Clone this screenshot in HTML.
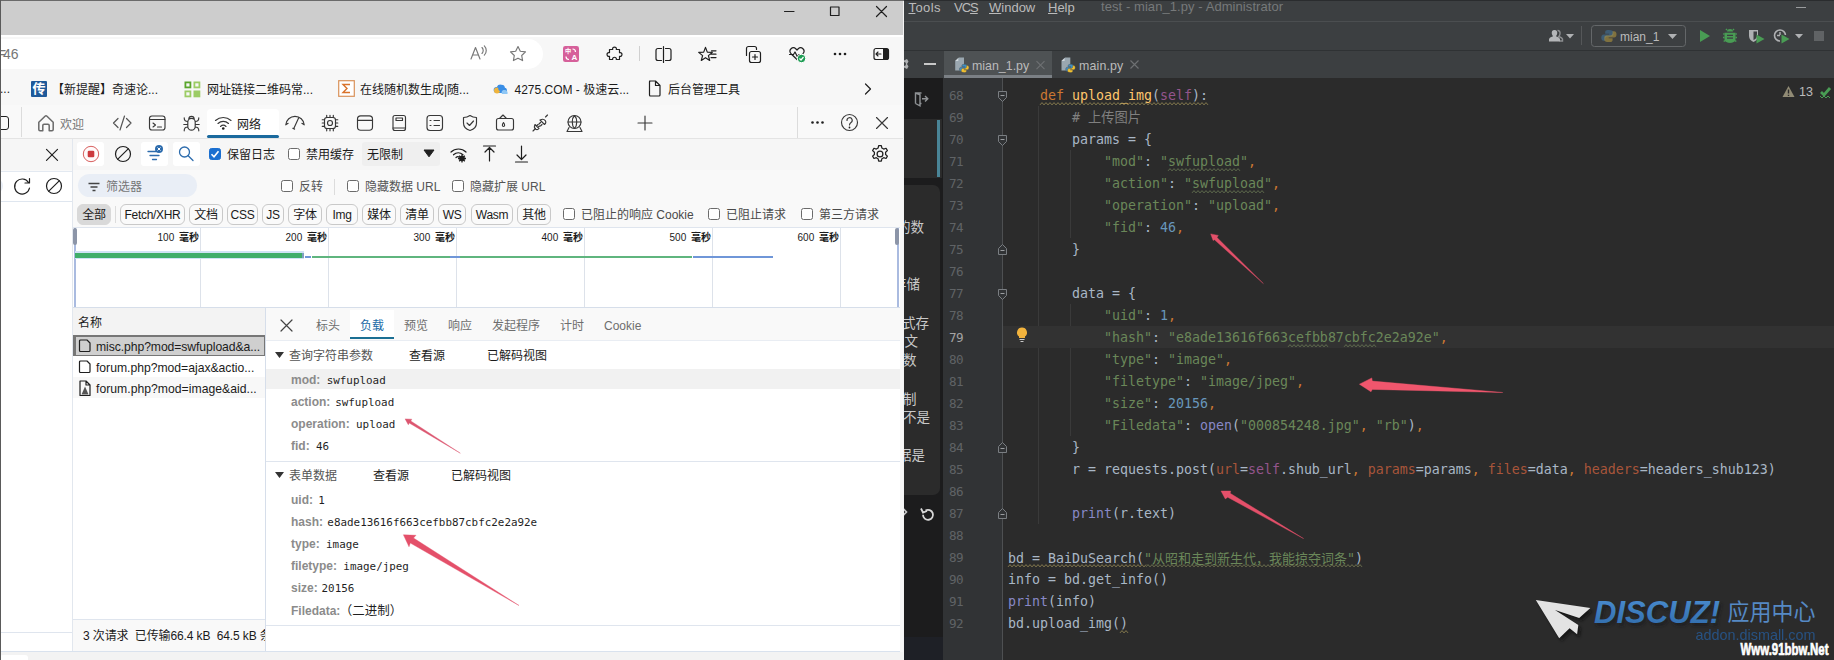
<!DOCTYPE html>
<html lang="zh-CN">
<head>
<meta charset="utf-8">
<title>screenshot</title>
<style>
*{box-sizing:border-box;margin:0;padding:0}
html,body{width:1834px;height:660px;overflow:hidden;background:#2b2b2b}
body{position:relative;font-family:"Liberation Sans","Noto Sans CJK SC",sans-serif;font-size:12px;color:#1b1b1b}
.a{position:absolute}
.t{position:absolute;white-space:nowrap;line-height:16px}
svg{position:absolute;overflow:visible}
/* ---------- browser ---------- */
#br{position:absolute;left:0;top:0;width:904px;height:660px;background:#f7f7f7;overflow:hidden}
#br:after{content:"";position:absolute;left:0;top:0;width:1px;height:660px;background:#5a5a5a}
.ic{fill:none;stroke:#1f1f1f;stroke-width:1.2;stroke-linecap:round;stroke-linejoin:round}
.cb{position:absolute;width:12px;height:12px;border:1px solid #6b6b6b;border-radius:2.5px;background:#fff}
.pill{position:absolute;top:204px;height:21px;letter-spacing:-0.300px;padding-top:1px;border:1px solid #c9c9c9;border-radius:6px;background:#fafafa;text-align:center;line-height:19px;font-size:12px;color:#1b1b1b;white-space:nowrap}
.gl{position:absolute;top:228px;width:1px;height:79px;background:#dde2ea}
.tl{position:absolute;top:232px;font-size:10px;word-spacing:2px;line-height:12px;white-space:nowrap;text-align:right;width:60px;color:#1b1b1b}
.dt{position:absolute;top:317.700px;font-size:12px;line-height:16px;color:#6e6e6e;white-space:nowrap}
.k{color:#8b8b8b;font-weight:bold;font-family:"Liberation Sans","Noto Sans CJK SC",sans-serif;font-size:12px}
.v{font-family:"DejaVu Sans Mono","Liberation Mono","Noto Sans CJK SC",monospace;font-size:10.900px;color:#1f1f1f;margin-left:3px}
.row{position:absolute;left:291px;white-space:nowrap;line-height:16px}
/* ---------- ide ---------- */
#ide{position:absolute;left:904px;top:0;width:930px;height:660px;background:#2b2b2b;overflow:hidden;color:#a9b7c6}
.ln{position:absolute;left:0;width:930px;height:22px}
.no{position:absolute;left:45px;top:1px;width:30px;line-height:22px;font-family:"DejaVu Sans Mono","Liberation Mono",monospace;font-size:12.600px;letter-spacing:-0.700px;color:#606366;white-space:pre}
.cd{position:absolute;left:104px;top:1px;line-height:22px;font-family:"DejaVu Sans Mono","Liberation Mono","Noto Sans CJK SC",monospace;font-size:13.29px;color:#a9b7c6;white-space:pre}
.sd{left:-7px;font-size:13.500px;line-height:18px;color:#c9c9c9;font-family:"Noto Sans CJK SC",sans-serif}
.cj{font-family:"Noto Sans CJK SC",sans-serif;font-size:13px}
.cur{color:#a4a3a3}
.kw{color:#cc7832}.fn{color:#ffc66d}.sf{color:#94558d}.st{color:#6a8759}.nu{color:#6897bb}.cm{color:#808080}.bi{color:#8888c6}.ka{color:#a8553a}
.wv{}
.wy{}
</style>
</head>
<body>
<div id="br">
<!-- title bar -->
<div class="a" style="left:0;top:0;width:904px;height:35px;background:#cdcdcd"></div>
<div class="a" style="left:0;top:0;width:904px;height:1px;background:#6a6a6a"></div>
<svg style="left:783px;top:5px" width="110" height="14" viewBox="0 0 110 14"><path class="ic" style="stroke-width:1.2" d="M1.500 6.500h9.500M47.500 2h8.500v8.500h-8.500zM93.500 1.500l10 10M103.500 1.500l-10 10"/></svg>
<!-- address row -->
<div class="a" style="left:0;top:35px;width:904px;height:2px;background:#fff"></div>
<div class="a" style="left:903px;top:1px;width:1px;height:659px;background:#f4f4f4;z-index:3"></div>
<div class="a" style="left:-20px;top:39px;width:563px;height:30px;background:#fff;border-radius:15px"></div>
<div class="t" style="left:3px;top:46px;font-size:14px;color:#767676">46</div>
<div class="t" style="left:-2px;top:45px;font-size:14px;color:#767676">=</div>
<svg style="left:468px;top:44px" width="420" height="22" viewBox="0 0 420 22">
 <g class="ic" style="stroke:#777;stroke-width:1.150">
  <path d="M3 15l4.5-11.5L12 15M4.6 11h5.8M14 3.5c1.6 1.6 1.6 4.4 0 6M16.3 1.8c2.6 2.6 2.6 6.8 0 9.4"/>
  <path d="M50 2.5l2.3 4.7 5.2.7-3.8 3.6.9 5.1-4.6-2.4-4.6 2.4.9-5.1-3.800-3.600 5.200-.7z"/>
 </g>
 <rect x="95" y="2" width="16" height="16" rx="2.300" fill="#d6609a"/>
 <text x="97" y="9.300" font-size="6.200" fill="#fff" font-family="Liberation Sans,Noto Sans CJK SC,sans-serif" font-weight="bold">中</text>
 <text x="103.500" y="16" font-size="8" fill="#fff" font-family="Liberation Sans,sans-serif" font-weight="bold">A</text>
 <path d="M98 12.500c0 2 1 3 3 3M104.500 5c2 0 3 1 3 3" stroke="#fff" fill="none" stroke-width="1.200"/>
 <g class="ic">
  <path d="M141.500 5.500h3.200c-.9-3.300 4.500-3.300 3.600 0h3.200v3.200c3.300-.9 3.300 4.500 0 3.600v3.200h-3.200c.9-3 -4.500-3-3.600 0h-3.200v-3.200c-3.300.9-3.300-4.500 0-3.600z"/>
  <path d="M193.500 4.500h-3.500a2 2 0 0 0-2 2v8a2 2 0 0 0 2 2h3.500M197.500 4.500h3.500a2 2 0 0 1 2 2v8a2 2 0 0 1-2 2h-3.500M195.500 2.500v16"/>
  <path d="M237.5 3.4L239.3 8.1L244.3 8.4L240.4 11.6L241.7 16.4L237.5 13.7L233.3 16.4L234.6 11.6L230.7 8.4L235.7 8.1z M243.500 6.800h4.500M242.300 10.200h5.700M243 13.600h5"/>
  <path d="M278.500 11.500v-7a2 2 0 0 1 2-2h6a2 2 0 0 1 2 2v1M283.500 7.500h7a2 2 0 0 1 2 2v7a2 2 0 0 1-2 2h-7a2 2 0 0 1-2-2v-7a2 2 0 0 1 2-2zM287 10.500v5M284.500 13h5"/>
  <path d="M329 15.500l-6-5.800c-3-3.500 1.500-8 5-4.700l1 1 1-1c3.500-3.300 8 1.200 5 4.700M321.500 10.500h4l1.500-2.500 2.500 5 1.500-2.500h2"/>
 </g>
 <circle cx="333.500" cy="14.500" r="4.200" fill="#1f9d55" stroke="#fff" stroke-width="1"/>
 <path d="M331.500 14.500l1.500 1.500 2.500-3" stroke="#fff" fill="none" stroke-width="1.200"/>
 <circle cx="367" cy="10" r="1.300" fill="#1f1f1f"/><circle cx="372" cy="10" r="1.300" fill="#1f1f1f"/><circle cx="377" cy="10" r="1.300" fill="#1f1f1f"/>
 <rect x="406" y="4.500" width="14.500" height="11" rx="2" class="ic"/>
 <path d="M415 4.500h3.500a2 2 0 0 1 2 2v7a2 2 0 0 1-2 2h-3.500z" fill="#1f1f1f"/>
 <path d="M413 10h-5M410 8l-2 2 2 2" class="ic" style="stroke-width:1.100"/>
</svg>
<div class="a" style="left:639px;top:46px;width:1px;height:15px;background:#d0d0d0"></div>
<!-- bookmarks -->
<div class="t" style="left:0;top:81px;font-size:12px">...</div>
<div class="a" style="left:31px;top:81px;width:16px;height:16px;background:#1f5a9a;border-radius:1px"></div>
<div class="t" style="left:32.500px;top:80px;font-size:13px;line-height:17px;color:#fff;font-weight:bold">传</div>
<div class="t" style="left:52px;top:82px">【新提醒】奇速论...</div>
<svg style="left:184px;top:81px" width="17" height="17" viewBox="0 0 17 17"><g fill="none" stroke="#5aa62c" stroke-width="1.800"><rect x="1.400" y="1.400" width="5" height="5"/></g><g fill="none" stroke="#9ccc65" stroke-width="1.800"><rect x="10.400" y="1.400" width="5" height="5"/><rect x="1.400" y="10.400" width="5" height="5"/></g><rect x="9.500" y="9.500" width="6.800" height="6.800" fill="#9ccc65"/></svg>
<div class="t" style="left:207px;top:82px">网址链接二维码常...</div>
<svg style="left:338px;top:80px" width="17" height="17" viewBox="0 0 17 17"><rect x=".700" y=".700" width="15.600" height="15.600" fill="#fff" stroke="#d9925a" stroke-width="1.200"/><path d="M12 4.500H5l4 4-4 4h7" fill="none" stroke="#d9722a" stroke-width="1.400"/></svg>
<div class="t" style="left:360px;top:82px">在线随机数生成|随...</div>
<svg style="left:493px;top:82px" width="16" height="13" viewBox="0 0 16 13"><path d="M3.500 11a3 3 0 0 1 .3-6 4 4 0 0 1 7.500.5 2.800 2.800 0 0 1 .7 5.500z" fill="#3a8ee6"/><circle cx="4" cy="8.500" r="3" fill="#f0b43c"/><circle cx="8.500" cy="6" r="3.300" fill="#3a8ee6"/><path d="M9 12c-1-2 0-4 2.500-4s3.500 2 3 4z" fill="#8fc7f5"/></svg>
<div class="t" style="left:514.500px;top:82px">4275.COM - 极速云...</div>
<svg style="left:648px;top:80px" width="13" height="17" viewBox="0 0 13 17"><path class="ic" d="M1.500 1h6l4.500 4.500v9.500a1 1 0 0 1-1 1h-8.500a1 1 0 0 1-1-1v-13a1 1 0 0 1 1-1zM7.500 1v4.500h4.500"/></svg>
<div class="t" style="left:668px;top:82px">后台管理工具</div>
<svg style="left:863px;top:82px" width="10" height="14" viewBox="0 0 10 14"><path class="ic" d="M2.500 2l5 5-5 5"/></svg>
<!-- devtools tabs row -->
<div class="a" style="left:0;top:105px;width:904px;height:33px;background:#f9f9f9"></div>
<div class="a" style="left:0;top:138px;width:904px;height:1px;background:#e4e4e4"></div>
<div class="a" style="left:21px;top:107px;width:1px;height:30px;background:#dcdcdc"></div>
<div class="a" style="left:-6px;top:116px;width:15px;height:14px;border:1.300px solid #1f1f1f;border-radius:3px"></div>
<div class="a" style="left:207px;top:109px;width:72px;height:27px;background:#fff;border-radius:4px 4px 0 0"></div>
<div class="a" style="left:207px;top:135px;width:72px;height:3px;background:#1b6a9e;border-radius:2px"></div>
<div class="t" style="left:60px;top:116.500px;color:#767676">欢迎</div>
<div class="t" style="left:237px;top:116.500px">网络</div>
<svg style="left:0;top:105px" width="904" height="34" viewBox="0 0 904 34">
 <g class="ic" style="stroke:#555">
  <path d="M38.800 17.200l6.200-6a1.500 1.500 0 0 1 2 0l6.200 6v7.300a1.200 1.200 0 0 1-1.200 1.200h-2.800v-5.200a1.200 1.200 0 0 0-1.200-1.200h-4a1.200 1.200 0 0 0-1.200 1.200v5.200h-2.800a1.200 1.200 0 0 1-1.200-1.200z" style="stroke:#6a6a6a;stroke-width:1.500"/>
  <path d="M118 13.500l-4.500 4.500 4.500 4.500M126.500 13.500l4.500 4.500-4.500 4.500M124.500 11l-4.500 14"/>
 </g>
 <g class="ic" style="stroke:#383838;stroke-width:1.150">
  <rect x="149.500" y="11" width="15.500" height="14" rx="2.500"/><path d="M149.500 14.500h15.500M153 18l2.500 2-2.500 2M157.500 22h4"/>
  <path d="M187.800 17a3.700 3.700 0 0 1 7.400 0v4.500a3.700 3.700 0 0 1-7.400 0zM188.900 13.900a2.600 2.600 0 0 1 5.200 0M187.800 16.500c-2.300 0-3.600-1.200-3.600-3.800M187.800 19.500h-4M187.800 22c-2.300 0-3.600 1.200-3.600 3.800M195.200 16.500c2.300 0 3.600-1.200 3.600-3.800M195.200 19.500h4M195.200 22c2.300 0 3.600 1.200 3.600 3.800"/>
  <path d="M215.500 15.500c4.500-4 11-4 15.500 0M218 18.500c3-2.800 7.500-2.800 10.500 0M220.500 21.500c1.600-1.500 3.900-1.500 5.500 0"/>
  <path d="M285.800 19.800a9.230 9.230 0 0 1 18.400 0M285.800 19.800l2.300-1.500M304.200 19.800l-2.300-1.500M293.800 23.500l4.800-10.500M292.800 23.300l1.800.8"/>
  <circle cx="330" cy="18" r="2.500"/><rect x="324.500" y="12.500" width="11" height="11" rx="2.500"/><path d="M326.700 12.500v-2.300M330 12.500v-2.300M333.300 12.500v-2.300M326.700 25.800v-2.300M330 25.800v-2.300M333.300 25.800v-2.300M324.500 14.700h-2.300M324.500 18h-2.300M324.500 21.300h-2.300M337.800 14.700h-2.300M337.800 18h-2.300M337.800 21.300h-2.300"/>
  <rect x="357.500" y="10.800" width="15" height="14.400" rx="3.200"/><path d="M357.500 15.300h15"/>
  <rect x="393" y="10.500" width="12.500" height="15" rx="2"/><path d="M393 23h12.500M396 13h6.500v2.500h-6.500z"/>
  <rect x="427" y="10.500" width="15.500" height="15" rx="3"/><path d="M434 15.500h5.500M434 20.500h5.500M430 15.500h1M430 20.500h1"/>
  <path d="M470 10.500c2.500 1.800 4.500 2 6.500 2v5.500c0 4-3 6.500-6.500 7.500-3.500-1-6.500-3.500-6.500-7.500v-5.500c2 0 4-.2 6.500-2zM467 18l2.500 2.500 4-4.500"/>
  <rect x="496.500" y="13.500" width="17" height="11.500" rx="2"/><path d="M499.500 13.500l3.500-3.500 3.500 3.500M503.500 17.500c-1.500 2-1.500 4 0 4s1.500-2 0-4z"/>
  <path d="M533 26l2.500-2.500M535 19.500l4 4c-2 2.500-6 .5-4-4zM536.500 21l1.500-1.500M538 22.500l1.500-1.500M545.500 12l2-2M540 15l4.500 4.500c3-2 .5-7-4.500-4.500zM540.500 17.500l-1.500 1.500M542 19.500l-1.500 1.500"/>
  <circle cx="574.500" cy="17" r="6.500"/><path d="M568 17h13M574.500 10.500c-3 3-3 10 0 13M574.500 10.500c3 3 3 10 0 13M569 22.500l-2 4h15l-2-4"/>
  <path d="M645 11v14M638 18h14"/>
  <path d="M876.500 12.500l11 11M887.500 12.500l-11 11"/>
  <circle cx="849.500" cy="17.500" r="8"/><path d="M847 15.500a2.600 2.600 0 1 1 4 2c-1 .8-1.500 1.200-1.500 2.500"/>
 </g>
 <circle cx="849.500" cy="22.500" r=".900" fill="#1f1f1f"/>
 <circle cx="223.250" cy="23.500" r="1.300" fill="#1f1f1f"/>
 <circle cx="812.500" cy="17.500" r="1.300" fill="#1f1f1f"/><circle cx="817.500" cy="17.500" r="1.300" fill="#1f1f1f"/><circle cx="822.500" cy="17.500" r="1.300" fill="#1f1f1f"/>
</svg>
<div class="a" style="left:797px;top:107px;width:1px;height:31px;background:#dcdcdc"></div>
<!-- network toolbar row y139-170 -->
<div class="a" style="left:0;top:139px;width:904px;height:31px;background:#f6f6f6"></div>
<div class="a" style="left:0;top:169.500px;width:904px;height:1px;background:#d9e2ee"></div>
<div class="a" style="left:0;top:170px;width:904px;height:30px;background:#f9f9f9"></div>
<div class="a" style="left:0;top:170.500px;width:72px;height:462px;background:#fff;border-top:1px solid #e3e9f1"></div>
<div class="a" style="left:0;top:201px;width:72px;height:1px;background:#dfe6ef"></div>
<div class="a" style="left:-30px;top:177px;width:33px;height:18px;background:#e9eef6;border-radius:9px"></div>
<div class="a" style="left:72px;top:139px;width:1px;height:512px;background:#e2e7ee"></div>
<div class="a" style="left:77px;top:142px;width:27px;height:24px;background:#fff;border-radius:3px"></div>
<div class="a" style="left:141px;top:142px;width:27px;height:24px;background:#fff;border-radius:3px"></div>
<div class="a" style="left:173px;top:142px;width:27px;height:24px;background:#fff;border-radius:3px"></div>
<div class="a" style="left:362px;top:142px;width:78px;height:24px;background:#efefef;border-radius:3px"></div>
<div class="a" style="left:78px;top:174px;width:119px;height:23px;background:#e9eef6;border-radius:12px"></div>
<svg style="left:0;top:139px" width="904" height="62" viewBox="0 0 904 62">
 <g class="ic">
  <path d="M46.500 10.300l11 11M57.500 10.300l-11 11"/>
  <circle cx="123" cy="15" r="7.500"/><path d="M117.800 20.200l10.400-10.400"/>
  <circle cx="54" cy="47" r="7.500"/><path d="M48.800 52.200l10.400-10.400"/>
  <path d="M28.500 43.500a7.500 7.500 0 1 0 1 5.500M29.500 39.500v4.500h-4.500"/>
  <path d="M451 13c4.200-4 10.800-4 15 0M453.500 15.800c2.800-2.600 6.700-2.600 9.500 0M456 18.500c1.300-1.200 2.200-1.200 3 -.5"/>
  <path d="M489.500 22v-13.500M485 13l4.500-4.500 4.500 4.500M483.500 7h12"/>
  <path d="M521.500 7v13.500M517 16l4.500 4.500 4.500-4.500M515.500 23h12"/>
  <g transform="translate(880 15) scale(1.120) translate(-880 -15)" style="stroke-width:1.100"><circle cx="880" cy="15" r="2.600"/>
  <path d="M878.800 7.500h2.400l.5 2.200 1.600.9 2.100-.7 1.200 2.100-1.600 1.500v1.900l1.600 1.500-1.200 2.100-2.100-.7-1.600.9-.5 2.200h-2.400l-.5-2.200-1.600-.9-2.100.7-1.200-2.100 1.600-1.500v-1.900l-1.600-1.500 1.200-2.100 2.100.7 1.600-.9z"/></g>
 </g>
 <circle cx="91" cy="15" r="7.700" fill="#fffafa" stroke="#d8605f" stroke-width="1"/>
 <rect x="87.700" y="11.700" width="6.600" height="6.600" rx="1.300" fill="#cc3a3e"/>
 <g fill="none" stroke="#2d6cad" stroke-width="1.300" stroke-linecap="round">
  <path d="M148 12.500h8M150 16.500h9M152.500 20.500h4"/>
  <circle cx="184.500" cy="13" r="5"/><path d="M188.200 16.700l4.800 4.800"/>
 </g>
 <circle cx="159" cy="10" r="4" fill="#2d6cad"/><path d="M157.500 8.500l3 3M160.500 8.500l-3 3" stroke="#fff" stroke-width="1" fill="none"/>
 <circle cx="462" cy="19.500" r="2.800" fill="#1f1f1f"/><circle cx="462" cy="19.500" r="1" fill="#f3f3f3"/>
 <path d="M462 15.500v8M458 19.500h8M459.200 16.700l5.600 5.600M464.800 16.700l-5.600 5.600" stroke="#1f1f1f" stroke-width="1.300"/>
 <path d="M424 11h10l-5 6.800z" fill="#1f1f1f" stroke="#1f1f1f" stroke-width="1" stroke-linejoin="round"/>
 <path d="M88.500 44.500h11M90.500 48h7M92.500 51.500h3" stroke="#444" stroke-width="1.400" fill="none"/>
</svg>
<div class="cb" style="left:208.500px;top:148px;background:#1a6fd0;border-color:#1a6fd0"></div>
<svg style="left:209px;top:148px" width="12" height="12" viewBox="0 0 12 12"><path d="M2.500 6.200l2.500 2.500 4.500-5.500" fill="none" stroke="#fff" stroke-width="1.600"/></svg>
<div class="t" style="left:227px;top:147px">保留日志</div>
<div class="cb" style="left:288px;top:148px"></div>
<div class="t" style="left:306px;top:147px">禁用缓存</div>
<div class="t" style="left:367px;top:147px">无限制</div>
<!-- filter row -->
<div class="t" style="left:106px;top:179px;color:#767676">筛选器</div>
<div class="cb" style="left:281px;top:180px"></div><div class="t" style="left:299px;top:179px;color:#555">反转</div>
<div class="a" style="left:334px;top:179px;width:1px;height:16px;background:#dcdcdc"></div>
<div class="cb" style="left:347px;top:180px"></div><div class="t" style="left:365px;top:179px;color:#555">隐藏数据 URL</div>
<div class="cb" style="left:452px;top:180px"></div><div class="t" style="left:470px;top:179px;color:#555">隐藏扩展 URL</div>
<!-- type pills -->
<div class="a" style="left:73px;top:200px;width:831px;height:28px;background:#f9f9f9"></div>
<div class="pill" style="left:77px;width:34px;background:#d9d9d9;border-color:#d9d9d9">全部</div>
<div class="a" style="left:115px;top:206px;width:1px;height:17px;background:#dcdcdc"></div>
<div class="pill" style="left:120px;width:65px">Fetch/XHR</div>
<div class="pill" style="left:189px;width:34px">文档</div>
<div class="pill" style="left:227px;width:31px">CSS</div>
<div class="pill" style="left:262px;width:22px">JS</div>
<div class="pill" style="left:288px;width:34px">字体</div>
<div class="pill" style="left:326px;width:32px">Img</div>
<div class="pill" style="left:362px;width:34px">媒体</div>
<div class="pill" style="left:400px;width:34px">清单</div>
<div class="pill" style="left:438px;width:28px">WS</div>
<div class="pill" style="left:471px;width:42px">Wasm</div>
<div class="pill" style="left:517px;width:34px">其他</div>
<div class="cb" style="left:563px;top:208px"></div><div class="t" style="left:581px;top:207px;color:#4a4a4a">已阻止的响应 Cookie</div>
<div class="cb" style="left:708px;top:208px"></div><div class="t" style="left:726px;top:207px;color:#4a4a4a">已阻止请求</div>
<div class="cb" style="left:801px;top:208px"></div><div class="t" style="left:819px;top:207px;color:#4a4a4a">第三方请求</div>
<!-- timeline -->
<div class="a" style="left:73px;top:227px;width:831px;height:1px;background:#dfe5ee"></div>
<div class="a" style="left:73px;top:228px;width:827px;height:79px;background:#fff"></div>
<div class="a" style="left:73px;top:307px;width:831px;height:1px;background:#d6deea"></div>
<div class="gl" style="left:200px"></div><div class="gl" style="left:328px"></div><div class="gl" style="left:456px"></div><div class="gl" style="left:584px"></div><div class="gl" style="left:712px"></div><div class="gl" style="left:840px"></div>
<div class="tl" style="left:139px">100 <b>毫秒</b></div><div class="tl" style="left:267px">200 <b>毫秒</b></div><div class="tl" style="left:395px">300 <b>毫秒</b></div><div class="tl" style="left:523px">400 <b>毫秒</b></div><div class="tl" style="left:651px">500 <b>毫秒</b></div><div class="tl" style="left:779px">600 <b>毫秒</b></div>
<div class="a" style="left:73.500px;top:228px;width:2px;height:79px;background:#aabbe0"></div>
<div class="a" style="left:896.500px;top:228px;width:2px;height:79px;background:#aabbe0"></div>
<div class="a" style="left:73px;top:228px;width:4px;height:17px;background:#8c95a8;border-radius:2px"></div>
<div class="a" style="left:895px;top:228px;width:4px;height:17px;background:#8c95a8;border-radius:2px"></div>
<div class="a" style="left:75px;top:251px;width:229px;height:8px;background:#cfe3f5"></div>
<div class="a" style="left:75px;top:252.500px;width:228px;height:5px;background:#3fae6a"></div>
<div class="a" style="left:302px;top:252.500px;width:2px;height:5px;background:#7f9fc0"></div>
<div class="a" style="left:305px;top:255.500px;width:6px;height:2px;background:#6f96d8"></div>
<div class="a" style="left:312px;top:255.500px;width:138px;height:2px;background:#5fb57e"></div>
<div class="a" style="left:450px;top:255.500px;width:10px;height:2px;background:#6f96d8"></div>
<div class="a" style="left:460px;top:255.500px;width:232px;height:2px;background:#5fb57e"></div>
<div class="a" style="left:693px;top:255.500px;width:80px;height:2px;background:#6f96d8"></div>
<!-- request list -->
<div class="a" style="left:73px;top:308px;width:192px;height:311px;background:#fff"></div>
<div class="a" style="left:73px;top:308px;width:192px;height:27px;background:#f3f3f3"></div>
<div class="t" style="left:78px;top:314.500px">名称</div>
<div class="a" style="left:73px;top:335px;width:192px;height:21px;background:#cfcfcf;border:1px solid #767676;border-top-width:2px;border-left-width:3px"></div>
<div class="a" style="left:73px;top:377px;width:192px;height:21px;background:#f8f8f8"></div>
<div class="t" style="left:96px;top:338.700px;font-size:12.200px;letter-spacing:-0.080px">misc.php?mod=swfupload&amp;a...</div>
<div class="t" style="left:96px;top:359.700px;font-size:12.200px;letter-spacing:-0.020px">forum.php?mod=ajax&amp;actio...</div>
<div class="t" style="left:96px;top:380.700px;font-size:12.200px;letter-spacing:0.020px">forum.php?mod=image&amp;aid...</div>
<svg style="left:79px;top:339px" width="13" height="58" viewBox="0 0 13 58">
 <g class="ic" style="stroke-width:1.200"><path d="M1.500 1h6.500l3 3v7.500a1 1 0 0 1-1 1h-8.500a1 1 0 0 1-1-1v-9.500a1 1 0 0 1 1-1zM1.500 22h6.500l3 3v7.500a1 1 0 0 1-1 1h-8.500a1 1 0 0 1-1-1v-9.500a1 1 0 0 1 1-1zM1 42h6l4 4v10.500h-10zM7 42v4h4"/></g>
 <path d="M2.500 55.500l3.500-8 3.500 8z" fill="#555"/>
</svg>
<div class="a" style="left:265px;top:308px;width:1px;height:343px;background:#d6deea"></div>
<!-- status bar -->
<div class="a" style="left:73px;top:619px;width:192px;height:1px;background:#dfe5ee"></div>
<div class="a" style="left:73px;top:620px;width:192px;height:31px;background:#f9f9f9"></div>
<div class="t" style="left:83px;top:628px;width:182px;overflow:hidden;letter-spacing:-0.120px">3 次请求&nbsp;&nbsp;已传输66.4 kB&nbsp;&nbsp;64.5 kB 条资源</div>
<div class="a" style="left:0;top:632px;width:72px;height:1px;background:#dfe5ee"></div>
<div class="a" style="left:0;top:633px;width:72px;height:18px;background:#fff"></div>
<div class="a" style="left:0;top:651px;width:904px;height:1px;background:#d9e2ee"></div>
<div class="a" style="left:0;top:652px;width:904px;height:8px;background:#f3f3f3"></div>
<div class="a" style="left:0;top:655px;width:28px;height:5px;background:#fff;border-radius:3px 3px 0 0"></div>
<!-- details pane -->
<div class="a" style="left:266px;top:308px;width:638px;height:343px;background:#fff"></div>
<div class="a" style="left:266px;top:308px;width:638px;height:32px;background:#f9f9f9"></div>
<div class="a" style="left:266px;top:340px;width:638px;height:1px;background:#e9edf3"></div>
<div class="a" style="left:350px;top:310px;width:44px;height:29px;background:#fff"></div>
<div class="a" style="left:350px;top:336.800px;width:44px;height:2.200px;background:#1b6f93"></div>
<svg style="left:280px;top:319px" width="13" height="13" viewBox="0 0 13 13"><path class="ic" style="stroke:#444" d="M1 1l11 11M12 1l-11 11"/></svg>
<div class="dt" style="left:316px">标头</div>
<div class="dt" style="left:360px;color:#1a6aa6">负载</div>
<div class="dt" style="left:404px">预览</div>
<div class="dt" style="left:448px">响应</div>
<div class="dt" style="left:492px">发起程序</div>
<div class="dt" style="left:560px">计时</div>
<div class="dt" style="left:604px">Cookie</div>
<div class="a" style="left:266px;top:369px;width:634px;height:20px;background:#f1f1f1"></div>
<div class="a" style="left:266px;top:461px;width:638px;height:1px;background:#dfe5ee"></div>
<div class="a" style="left:266px;top:625px;width:638px;height:1px;background:#dfe5ee"></div>
<svg style="left:275px;top:351px" width="10" height="130" viewBox="0 0 10 130"><path d="M0 1h9l-4.500 6zM0 121h9l-4.500 6z" fill="#333"/></svg>
<div class="t" style="left:289px;top:348px;color:#555">查询字符串参数</div>
<div class="t" style="left:409px;top:348px">查看源</div>
<div class="t" style="left:487px;top:348px">已解码视图</div>
<div class="row" style="top:372px"><span class="k">mod:</span> <span class="v">swfupload</span></div>
<div class="row" style="top:394px"><span class="k">action:</span> <span class="v" style="margin-left:1.500px">swfupload</span></div>
<div class="row" style="top:416px"><span class="k">operation:</span> <span class="v">upload</span></div>
<div class="row" style="top:438px"><span class="k">fid:</span> <span class="v">46</span></div>
<div class="t" style="left:289px;top:468px;color:#555">表单数据</div>
<div class="t" style="left:373px;top:468px">查看源</div>
<div class="t" style="left:451px;top:468px">已解码视图</div>
<div class="row" style="top:492px"><span class="k">uid:</span> <span class="v" style="margin-left:2px">1</span></div>
<div class="row" style="top:514px"><span class="k">hash:</span> <span class="v" style="margin-left:1px">e8ade13616f663cefbb87cbfc2e2a92e</span></div>
<div class="row" style="top:536px"><span class="k">type:</span> <span class="v">image</span></div>
<div class="row" style="top:558px"><span class="k">filetype:</span> <span class="v">image/jpeg</span></div>
<div class="row" style="top:580px"><span class="k">size:</span> <span class="v" style="margin-left:.500px">20156</span></div>
<div class="row" style="top:602px"><span class="k">Filedata:</span><span class="v" style="margin-left:-.500px;font-size:12.500px;font-family:'Noto Sans CJK SC',sans-serif">（二进制）</span></div>
<!-- right edge of browser window -->
<div class="a" style="left:900px;top:139px;width:4px;height:513px;background:#f7f7f7"></div>


</div>
<div id="ide">
<!-- title + toolbar -->
<div class="a" style="left:0;top:0;width:930px;height:78px;background:#3c3f41"></div>
<div class="a" style="left:0;top:0;width:930px;height:1px;background:#2a2c2e"></div>
<div class="a" style="left:0;top:21px;width:930px;height:1px;background:#4b4e50"></div>
<div class="a" style="left:0;top:50px;width:930px;height:1px;background:#2f3234"></div>
<div class="t" style="left:4.500px;top:0px;font-size:13px;letter-spacing:.400px;color:#bbbbbb"><u>T</u>ools</div>
<div class="t" style="left:50px;top:0px;font-size:13px;letter-spacing:-1px;color:#bbbbbb">VC<u>S</u></div>
<div class="t" style="left:85px;top:0px;font-size:13px;color:#bbbbbb"><u>W</u>indow</div>
<div class="t" style="left:144px;top:0px;font-size:13px;color:#bbbbbb"><u>H</u>elp</div>
<div class="t" style="left:197px;top:-1px;font-size:13px;letter-spacing:0.070px;color:#76797a">test - mian_1.py - Administrator</div>
<div class="a" style="left:892px;top:7px;width:10px;height:1px;background:#9a9c9e"></div>
<!-- toolbar icons -->
<svg style="left:640px;top:22px" width="290" height="28" viewBox="0 0 290 28">
 <path d="M13.500 8.500c2 0 2.800 1.500 2.500 3.500-.2 1.200-.8 2-1.200 2.500 1.200.5 3.200 1 3.700 2.500v2h-3" fill="none" stroke="#8c8e90" stroke-width="1.400"/><path d="M10.500 8c2.200 0 3 1.600 2.700 3.600-.2 1.300-.8 2.100-1.300 2.700 1.500.6 3.600 1.200 4.100 2.900v2.300h-11v-2.300c.5-1.700 2.600-2.300 4.100-2.900-.5-.6-1.100-1.400-1.300-2.700-.300-2 .5-3.600 2.700-3.600z" fill="#b4b6b8"/>
 <path d="M22 12h8l-4 4.500z" fill="#afb1b3"/>
 <rect x="37" y="4" width="1" height="19" fill="#555759"/>
 <rect x="47.500" y="3.500" width="94" height="21" rx="3" fill="none" stroke="#646769"/>
 <path d="M64 7c-4 0-4 1.500-4 3v1.500h4.500v.8h-6c-2.500 0-3 2-3 3.700s.5 3.500 3 3.500h1.500v-2.200c0-1.800 1.200-2.800 3-2.800h4c1.500 0 2.500-1 2.500-2.500v-2c0-2-1.500-3-5.500-3z" fill="#3f7aa8" opacity=".5" transform="translate(9 1.800) scale(.87)"/>
 <path d="M64.500 21c4 0 4-1.500 4-3v-1.500h-4.500v-.8h6c2.500 0 3-2 3-3.700s-.5-3.500-3-3.500h-1.500v2.200c0 1.800-1.200 2.800-3 2.800h-4c-1.500 0-2.500 1-2.500 2.500v2c0 2 1.500 3 5.500 3z" fill="#b89a3c" opacity=".55" transform="translate(9 1.800) scale(.87)"/>
 <path d="M124 12h9l-4.500 5z" fill="#afb1b3"/>
 <path d="M156 8l10 6-10 6z" fill="#499c54"/>
 <g fill="none" stroke="#499c54" stroke-width="1.500"><path d="M180.500 12h-1.300M180.500 15.500h-1.500M181 18.500l-1.300 1M191.500 12h1.300M191.500 15.500h1.500M191 18.500l1.300 1M183 8l-1-1M189 8l1-1"/></g>
 <path d="M183 9.500a3 2.600 0 0 1 6 0z" fill="#499c54"/><path d="M180.500 10.800h11v6.200c0 5.200-11 5.200-11 0z" fill="#499c54"/>
 <path d="M183 13.300h6M183 16.200h6" stroke="#3c3f41" stroke-width="1.300"/>
 <path d="M205 8h9v6c0 3-2 5-4.500 6-2.500-1-4.500-3-4.500-6z" fill="#afb1b3"/><path d="M209.500 9.500h3.500v4.500c0 1.500-1.300 3-3.500 4z" fill="#3c3f41"/>
 <path d="M212.500 12.500l8 4.500-8 4.500z" fill="#499c54"/>
 <circle cx="236" cy="13.500" r="5.500" fill="none" stroke="#afb1b3" stroke-width="1.600"/><path d="M236 10v3.500h-3" stroke="#afb1b3" stroke-width="1.400" fill="none"/>
 <rect x="236" y="13" width="10" height="10" fill="#3c3f41"/>
 <path d="M237.500 12.500l8 4.500-8 4.500z" fill="#499c54"/>
 <path d="M251 12h8l-4 4.500z" fill="#afb1b3"/>
 <rect x="270" y="9" width="10" height="10" fill="#606365"/>
</svg>
<div class="t" style="left:716px;top:29px;font-size:12px;color:#bbbbbb">mian_1</div>
<!-- tab row -->
<div class="a" style="left:40px;top:51px;width:108px;height:27px;background:#4e5254"></div>
<div class="a" style="left:40px;top:75px;width:108px;height:3px;background:#7b8085"></div>
<div class="a" style="left:20px;top:63px;width:12px;height:2px;background:#c8c8c8"></div>
<svg style="left:0;top:57px" width="10" height="14" viewBox="0 0 10 14"><path d="M-3 2l3 1.500 3-1.500 1.500 2.500-1.500 2.500 1.500 2.500-1.500 2.500-3-1.500-3 1.500z" fill="#afb1b3"/><circle cx="0" cy="7" r="2" fill="#3c3f41"/></svg>
<svg style="left:49.500px;top:56.600px" width="130" height="16" viewBox="0 0 130 16">
 <g><path d="M4.800 .500h5.200v13h-8.800v-9.400z" fill="#9aa7b0"/><path d="M4.300 .900v3.200h-3.200z" fill="#cfd6db"/>
 <g transform="translate(2.600 2.800) scale(.820)"><path d="M9 5.500c-2.500 0-2.500 1-2.500 2v1h3v.5h-4c-1.500 0-2 1.200-2 2.500s.5 2.500 2 2.500h1v-1.500c0-1.200.8-2 2-2h2.500c1 0 1.800-.8 1.800-1.800v-1.200c0-1.300-1-2-3.800-2z" fill="#3d8fc4" stroke="#4e5254" stroke-width=".600"/>
 <path d="M9.500 15.500c2.500 0 2.500-1 2.500-2v-1h-3v-.5h4c1.500 0 2-1.200 2-2.500s-.5-2.500-2-2.500h-1v1.500c0 1.200-.8 2-2 2h-2.500c-1 0-1.800.8-1.800 1.800v1.200c0 1.300 1 2 3.800 2z" fill="#f2c12e" stroke="#4e5254" stroke-width=".400"/></g></g>
 <g transform="translate(106.300 0)"><path d="M4.800 .500h5.200v13h-8.800v-9.400z" fill="#9aa7b0"/><path d="M4.300 .900v3.200h-3.200z" fill="#cfd6db"/>
 <g transform="translate(2.600 2.800) scale(.820)"><path d="M9 5.500c-2.500 0-2.500 1-2.500 2v1h3v.5h-4c-1.500 0-2 1.200-2 2.500s.5 2.500 2 2.500h1v-1.500c0-1.200.8-2 2-2h2.500c1 0 1.800-.8 1.800-1.800v-1.200c0-1.300-1-2-3.800-2z" fill="#3d8fc4" stroke="#4e5254" stroke-width=".600"/>
 <path d="M9.500 15.500c2.500 0 2.500-1 2.500-2v-1h-3v-.5h4c1.500 0 2-1.200 2-2.500s-.5-2.500-2-2.500h-1v1.500c0 1.200-.8 2-2 2h-2.500c-1 0-1.800.8-1.800 1.800v1.200c0 1.300 1 2 3.800 2z" fill="#f2c12e" stroke="#4e5254" stroke-width=".400"/></g></g>
 <path d="M82.500 4.200l8 8M90.500 4.200l-8 8" stroke="#6e7173" stroke-width="1.100" fill="none"/>
</svg>
<svg style="left:225px;top:59.500px" width="12" height="10" viewBox="0 0 12 10"><path d="M1.500 .500l8 8M9.500 .500l-8 8" stroke="#6e7173" stroke-width="1.100" fill="none"/></svg>
<div class="t" style="left:68px;top:57.500px;font-size:12.400px;color:#bbbbbb">mian_1.py</div>
<div class="t" style="left:175px;top:57.500px;font-size:12.400px;letter-spacing:.150px;color:#bbbbbb">main.py</div>
<!-- editor -->
<div class="a" style="left:0;top:78px;width:40px;height:582px;background:#1c1c1d"></div>
<div class="a" style="left:0;top:119px;width:38px;height:59px;background:#2b2b2b"></div>
<div class="a" style="left:33px;top:120px;width:3px;height:57px;background:#4a8597"></div>
<div class="a" style="left:-8px;top:185px;width:44px;height:310px;background:#2b2b2b;border-radius:7px"></div>
<div class="a" style="left:0;top:637px;width:40px;height:23px;background:#1e2026"></div>
<svg style="left:10px;top:91px" width="16" height="16" viewBox="0 0 16 16"><path d="M7.500 2h-6v10.500M1.500 2l4.500 1.800v11l-4.500-2.300M6 12.500h1.500M8 7.800h5.500M11 5l2.800 2.800-2.800 2.800" fill="none" stroke="#8f9295" stroke-width="1.400"/></svg>
<svg style="left:0;top:505px" width="40" height="18" viewBox="0 0 40 18"><path d="M-1 3.500l3.500 3.500-3.500 3.500" fill="none" stroke="#c8c8c8" stroke-width="1.600"/><path d="M21.500 5.500a5 5 0 1 1-2.500 4.300M17 3.500l2 4 4-1.500" fill="none" stroke="#d8d8d8" stroke-width="1.800"/></svg>
<div class="t sd" style="top:217px;left:-7px">的数</div>
<div class="t sd" style="top:274px;left:-11px">存储</div>
<div class="t sd" style="top:312.5px;left:-2px">式存</div>
<div class="t sd" style="top:331px;left:.500px">文</div>
<div class="t sd" style="top:350px;left:-1px">数</div>
<div class="t sd" style="top:388.5px;left:-1px">制</div>
<div class="t sd" style="top:406.5px;left:-1px">不是</div>
<div class="t sd" style="top:444.5px;left:-6px">据是</div>
<div class="a" style="left:39px;top:78px;width:60px;height:582px;background:#313335"></div>
<div class="a" style="left:98px;top:78px;width:1px;height:582px;background:#4e5052"></div>
<!-- indent guides -->
<div class="a" style="left:134px;top:106px;width:1px;height:418px;background:#3a3a3a"></div>
<div class="a" style="left:166px;top:150px;width:1px;height:88px;background:#3a3a3a"></div>
<div class="a" style="left:166px;top:304px;width:1px;height:132px;background:#3a3a3a"></div>
<!-- fold markers -->
<svg style="left:93px;top:78.800px" width="12" height="450" viewBox="0 0 12 450">
 <g fill="#313335" stroke="#7a7e82" stroke-width="1">
  <path d="M1.500 12.500h8v6l-4 4-4-4zM1.500 56.500h8v6l-4 4-4-4zM1.500 210.500h8v6l-4 4-4-4z"/>
  <path d="M1.500 175.500h8v-6l-4-4-4 4zM1.500 373.500h8v-6l-4-4-4 4zM1.500 439.500h8v-6l-4-4-4 4z"/>
 </g>
 <path d="M3.500 16.500h4M3.500 60.500h4M3.500 214.500h4M3.500 171.500h4M3.500 369.500h4M3.500 435.500h4" stroke="#9a9da0" stroke-width="1"/>
</svg>
<!-- warnings -->
<svg style="left:878px;top:85px" width="52" height="14" viewBox="0 0 52 14"><path d="M6.500 1l6 11h-12z" fill="#918b75"/><path d="M6.500 4.500v4M6.500 9.800v1.200" stroke="#2b2b2b" stroke-width="1.400"/><path d="M39 7l3 3 6-7" fill="none" stroke="#499c54" stroke-width="2.800"/><path d="M38 11l2 2 2-2 2 2 2-2 2 2" fill="none" stroke="#499c54" stroke-width="1"/></svg>
<div class="t" style="left:895px;top:84px;font-size:12.500px;color:#bbbbbb">13</div>
<div class="ln" style="top:84px"><span class="no">68</span><span class="cd">    <span class="wy"><span class="kw">def </span><span class="fn">upload_img</span>(<span class="sf">self</span>):</span></span></div>
<div class="ln" style="top:106px"><span class="no">69</span><span class="cd">        <span class="cm"># 上传图片</span></span></div>
<div class="ln" style="top:128px"><span class="no">70</span><span class="cd">        params = {</span></div>
<div class="ln" style="top:150px"><span class="no">71</span><span class="cd">            <span class="st">"mod"</span>: <span class="st">"<span class="wv">swfupload</span>"</span><span class="kw">,</span></span></div>
<div class="ln" style="top:172px"><span class="no">72</span><span class="cd">            <span class="st">"action"</span>: <span class="st">"<span class="wv">swfupload</span>"</span><span class="kw">,</span></span></div>
<div class="ln" style="top:194px"><span class="no">73</span><span class="cd">            <span class="st">"operation"</span>: <span class="st">"upload"</span><span class="kw">,</span></span></div>
<div class="ln" style="top:216px"><span class="no">74</span><span class="cd">            <span class="st">"fid"</span>: <span class="nu">46</span><span class="kw">,</span></span></div>
<div class="ln" style="top:238px"><span class="no">75</span><span class="cd">        }</span></div>
<div class="ln" style="top:260px"><span class="no">76</span><span class="cd"></span></div>
<div class="ln" style="top:282px"><span class="no">77</span><span class="cd">        data = {</span></div>
<div class="ln" style="top:304px"><span class="no">78</span><span class="cd">            <span class="st">"uid"</span>: <span class="nu">1</span><span class="kw">,</span></span></div>
<div class="ln" style="top:326px"><div class="a" style="left:99px;top:0;width:831px;height:22px;background:#323232"></div><span class="no cur">79</span><span class="cd">            <span class="st">"hash"</span>: <span class="st">"e8ade13616f663<span class="wv">cefbb</span>87<span class="wv">cbfc</span>2e2a92e"</span><span class="kw">,</span></span></div>
<div class="ln" style="top:348px"><span class="no">80</span><span class="cd">            <span class="st">"type"</span>: <span class="st">"image"</span><span class="kw">,</span></span></div>
<div class="ln" style="top:370px"><span class="no">81</span><span class="cd">            <span class="st">"filetype"</span>: <span class="st">"image/jpeg"</span><span class="kw">,</span></span></div>
<div class="ln" style="top:392px"><span class="no">82</span><span class="cd">            <span class="st">"size"</span>: <span class="nu">20156</span><span class="kw">,</span></span></div>
<div class="ln" style="top:414px"><span class="no">83</span><span class="cd">            <span class="st">"Filedata"</span>: <span class="bi">open</span>(<span class="st">"000854248.jpg"</span><span class="kw">, </span><span class="st">"rb"</span>)<span class="kw">,</span></span></div>
<div class="ln" style="top:436px"><span class="no">84</span><span class="cd">        }</span></div>
<div class="ln" style="top:458px"><span class="no">85</span><span class="cd">        r = requests.post(<span class="ka">url</span>=<span class="sf">self</span>.shub_url<span class="kw">, </span><span class="ka">params</span>=params<span class="kw">, </span><span class="ka">files</span>=data<span class="kw">, </span><span class="ka">headers</span>=headers_shub123)</span></div>
<div class="ln" style="top:480px"><span class="no">86</span><span class="cd"></span></div>
<div class="ln" style="top:502px"><span class="no">87</span><span class="cd">        <span class="bi">print</span>(r.text)</span></div>
<div class="ln" style="top:524px"><span class="no">88</span><span class="cd"></span></div>
<div class="ln" style="top:546px"><span class="no">89</span><span class="cd"><span class="wy">bd = BaiDuSearch(<span class="st">"<span class="cj">从昭和走到新生代，我能掠夺词条</span>"</span>)</span></span></div>
<div class="ln" style="top:568px"><span class="no">90</span><span class="cd">info = bd.get_info()</span></div>
<div class="ln" style="top:590px"><span class="no">91</span><span class="cd"><span class="bi">print</span>(info)</span></div>
<div class="ln" style="top:612px"><span class="no">92</span><span class="cd">bd.upload_img(<span class="wy">)</span></span></div>
<!-- bulb -->
<svg style="left:112px;top:327px" width="12" height="16" viewBox="0 0 12 16"><path d="M6 .500a5 5 0 0 1 3 9v1.500h-6v-1.500a5 5 0 0 1 3-9z" fill="#f2b33d"/><path d="M3.500 12.500h5M4.500 14.500h3" stroke="#c9c9c9" stroke-width="1.100"/></svg>
<!-- waves -->
<svg style="left:0;top:0" width="930" height="660" viewBox="0 0 930 660"><g fill="none" stroke-width=".850" stroke-linejoin="round" opacity=".850">
 <path d="M136.0 104.9L138.0 102.6L140.0 104.9L142.0 102.6L144.0 104.9L146.0 102.6L148.0 104.9L150.0 102.6L152.0 104.9L154.0 102.6L156.0 104.9L158.0 102.6L160.0 104.9L162.0 102.6L164.0 104.9L166.0 102.6L168.0 104.9L170.0 102.6L172.0 104.9L174.0 102.6L176.0 104.9L178.0 102.6L180.0 104.9L182.0 102.6L184.0 104.9L186.0 102.6L188.0 104.9L190.0 102.6L192.0 104.9L194.0 102.6L196.0 104.9L198.0 102.6L200.0 104.9L202.0 102.6L204.0 104.9L206.0 102.6L208.0 104.9L210.0 102.6L212.0 104.9L214.0 102.6L216.0 104.9L218.0 102.6L220.0 104.9L222.0 102.6L224.0 104.9L226.0 102.6L228.0 104.9L230.0 102.6L232.0 104.9L234.0 102.6L236.0 104.9L238.0 102.6L240.0 104.9L242.0 102.6L244.0 104.9L246.0 102.6L248.0 104.9L250.0 102.6L252.0 104.9L254.0 102.6L256.0 104.9L258.0 102.6L260.0 104.9L262.0 102.6L264.0 104.9L266.0 102.6L268.0 104.9L270.0 102.6L272.0 104.9L274.0 102.6L276.0 104.9L278.0 102.6L280.0 104.9L282.0 102.6L284.0 104.9L286.0 102.6L288.0 104.9L290.0 102.6L292.0 104.9L294.0 102.6L296.0 104.9L298.0 102.6L300.0 104.9L302.0 102.6L304.0 104.9" stroke="#a6975c"/>
 <path d="M264.0 170.9L266.0 168.6L268.0 170.9L270.0 168.6L272.0 170.9L274.0 168.6L276.0 170.9L278.0 168.6L280.0 170.9L282.0 168.6L284.0 170.9L286.0 168.6L288.0 170.9L290.0 168.6L292.0 170.9L294.0 168.6L296.0 170.9L298.0 168.6L300.0 170.9L302.0 168.6L304.0 170.9L306.0 168.6L308.0 170.9L310.0 168.6L312.0 170.9L314.0 168.6L316.0 170.9L318.0 168.6L320.0 170.9L322.0 168.6L324.0 170.9L326.0 168.6L328.0 170.9L330.0 168.6L332.0 170.9L334.0 168.6L336.0 170.9" stroke="#72825a"/>
 <path d="M288.0 192.9L290.0 190.6L292.0 192.9L294.0 190.6L296.0 192.9L298.0 190.6L300.0 192.9L302.0 190.6L304.0 192.9L306.0 190.6L308.0 192.9L310.0 190.6L312.0 192.9L314.0 190.6L316.0 192.9L318.0 190.6L320.0 192.9L322.0 190.6L324.0 192.9L326.0 190.6L328.0 192.9L330.0 190.6L332.0 192.9L334.0 190.6L336.0 192.9L338.0 190.6L340.0 192.9L342.0 190.6L344.0 192.9L346.0 190.6L348.0 192.9L350.0 190.6L352.0 192.9L354.0 190.6L356.0 192.9L358.0 190.6L360.0 192.9" stroke="#72825a"/>
 <path d="M384.0 346.9L386.0 344.6L388.0 346.9L390.0 344.6L392.0 346.9L394.0 344.6L396.0 346.9L398.0 344.6L400.0 346.9L402.0 344.6L404.0 346.9L406.0 344.6L408.0 346.9L410.0 344.6L412.0 346.9L414.0 344.6L416.0 346.9L418.0 344.6L420.0 346.9L422.0 344.6L424.0 346.9" stroke="#72825a"/>
 <path d="M440.0 346.9L442.0 344.6L444.0 346.9L446.0 344.6L448.0 346.9L450.0 344.6L452.0 346.9L454.0 344.6L456.0 346.9L458.0 344.6L460.0 346.9L462.0 344.6L464.0 346.9L466.0 344.6L468.0 346.9L470.0 344.6L472.0 346.9" stroke="#72825a"/>
 <path d="M104.0 566.9L106.0 564.6L108.0 566.9L110.0 564.6L112.0 566.9L114.0 564.6L116.0 566.9L118.0 564.6L120.0 566.9L122.0 564.6L124.0 566.9L126.0 564.6L128.0 566.9L130.0 564.6L132.0 566.9L134.0 564.6L136.0 566.9L138.0 564.6L140.0 566.9L142.0 564.6L144.0 566.9L146.0 564.6L148.0 566.9L150.0 564.6L152.0 566.9L154.0 564.6L156.0 566.9L158.0 564.6L160.0 566.9L162.0 564.6L164.0 566.9L166.0 564.6L168.0 566.9L170.0 564.6L172.0 566.9L174.0 564.6L176.0 566.9L178.0 564.6L180.0 566.9L182.0 564.6L184.0 566.9L186.0 564.6L188.0 566.9L190.0 564.6L192.0 566.9L194.0 564.6L196.0 566.9L198.0 564.6L200.0 566.9L202.0 564.6L204.0 566.9L206.0 564.6L208.0 566.9L210.0 564.6L212.0 566.9L214.0 564.6L216.0 566.9L218.0 564.6L220.0 566.9L222.0 564.6L224.0 566.9L226.0 564.6L228.0 566.9L230.0 564.6L232.0 566.9L234.0 564.6L236.0 566.9L238.0 564.6L240.0 566.9L242.0 564.6" stroke="#a6975c"/>
 <path d="M242.0 566.9L244.0 564.6L246.0 566.9L248.0 564.6L250.0 566.9L252.0 564.6L254.0 566.9L256.0 564.6L258.0 566.9L260.0 564.6L262.0 566.9L264.0 564.6L266.0 566.9L268.0 564.6L270.0 566.9L272.0 564.6L274.0 566.9L276.0 564.6L278.0 566.9L280.0 564.6L282.0 566.9L284.0 564.6L286.0 566.9L288.0 564.6L290.0 566.9L292.0 564.6L294.0 566.9L296.0 564.6L298.0 566.9L300.0 564.6L302.0 566.9L304.0 564.6L306.0 566.9L308.0 564.6L310.0 566.9L312.0 564.6L314.0 566.9L316.0 564.6L318.0 566.9L320.0 564.6L322.0 566.9L324.0 564.6L326.0 566.9L328.0 564.6L330.0 566.9L332.0 564.6L334.0 566.9L336.0 564.6L338.0 566.9L340.0 564.6L342.0 566.9L344.0 564.6L346.0 566.9L348.0 564.6L350.0 566.9L352.0 564.6L354.0 566.9L356.0 564.6L358.0 566.9L360.0 564.6L362.0 566.9L364.0 564.6L366.0 566.9L368.0 564.6L370.0 566.9L372.0 564.6L374.0 566.9L376.0 564.6L378.0 566.9L380.0 564.6L382.0 566.9L384.0 564.6L386.0 566.9L388.0 564.6L390.0 566.9L392.0 564.6L394.0 566.9L396.0 564.6L398.0 566.9L400.0 564.6L402.0 566.9L404.0 564.6L406.0 566.9L408.0 564.6L410.0 566.9L412.0 564.6L414.0 566.9L416.0 564.6L418.0 566.9L420.0 564.6L422.0 566.9L424.0 564.6L426.0 566.9L428.0 564.6L430.0 566.9L432.0 564.6L434.0 566.9L436.0 564.6L438.0 566.9L440.0 564.6L442.0 566.9L444.0 564.6L446.0 566.9L448.0 564.6L450.0 566.9L452.0 564.6L454.0 566.9L456.0 564.6L458.0 566.9" stroke="#84895a"/>
 <path d="M216.0 632.9L218.0 630.6L220.0 632.9L222.0 630.6L224.0 632.9" stroke="#a6975c"/>
</g></svg>

</div>
<svg style="left:0;top:0" width="1834" height="660" viewBox="0 0 1834 660">
 <g fill="#e4506a" stroke="#e4506a" stroke-width=".400" stroke-linejoin="round">
  <path d="M405.100 418.900L411.800 419.200L410.800 421L460.300 453.200L409.200 423L408.300 424.800z" fill="#dc5670" stroke="#dc5670"/>
  <path d="M403.400 534.800L416 535.300L413.500 538L519 605.500L410.300 543L409 546.800z"/>
  <path d="M1210.700 233.900L1218.300 235.400L1217 237.500L1263.400 283.600L1214.500 239.800L1213.100 240.500z"/>
  <path d="M1359.400 384.200L1371.800 377.900L1372.300 381.100L1502.700 392.500L1372.300 389.400L1371 391.800z" fill="#f0566d" stroke="#f0566d"/>
  <path d="M1221 491L1230.700 491L1230.200 493.300L1303.600 538.600L1227.700 497.200L1225.300 498.900z"/>
 </g>
 <!-- discuz watermark -->
 <defs>
  <filter id="sh" x="-20%" y="-20%" width="150%" height="150%"><feGaussianBlur stdDeviation="1.6"/></filter>
  <linearGradient id="dz" x1="0" y1="0" x2="0" y2="1"><stop offset="0" stop-color="#4c8fd2"/><stop offset="1" stop-color="#2f6aa9"/></linearGradient>
 </defs>
 <path d="M1535.800 600l54.600 7.900-11.200 10-24.200-7.900 23.300 15-1.200 9.200-7.500-5.900-10.400 10z" fill="#111" opacity=".7" filter="url(#sh)" transform="translate(2.500 3)"/>
 <path d="M1535.800 600l54.600 7.900-11.200 10-24.200-7.900 23.300 15-1.200 9.200-7.500-5.900-10.400 10z" fill="#e3e3e3"/>
 <text x="1596" y="625.500" font-family="Liberation Sans,sans-serif" font-weight="bold" font-style="italic" font-size="31" fill="#16181c" opacity=".6" filter="url(#sh)" textLength="126" lengthAdjust="spacingAndGlyphs">DISCUZ!</text>
 <text x="1594" y="622.500" font-family="Liberation Sans,sans-serif" font-weight="bold" font-style="italic" font-size="31" fill="url(#dz)" textLength="126" lengthAdjust="spacingAndGlyphs">DISCUZ!</text>
 <text x="1727.500" y="619.500" font-family="Noto Sans CJK SC,sans-serif" font-weight="400" font-size="23" fill="#5589c4" textLength="88" lengthAdjust="spacingAndGlyphs">应用中心</text>
 <text x="1695.500" y="639.500" font-family="Liberation Sans,sans-serif" font-size="14.500" fill="#27558a" opacity=".920" textLength="120" lengthAdjust="spacingAndGlyphs">addon.dismall.com</text>
 <text x="1740.500" y="654.500" font-family="Liberation Sans,sans-serif" font-weight="bold" font-size="16.500" fill="#ffffff" stroke="#fff" stroke-width=".700" textLength="88" lengthAdjust="spacingAndGlyphs">Www.91bbw.Net</text>
</svg>

</body>
</html>
